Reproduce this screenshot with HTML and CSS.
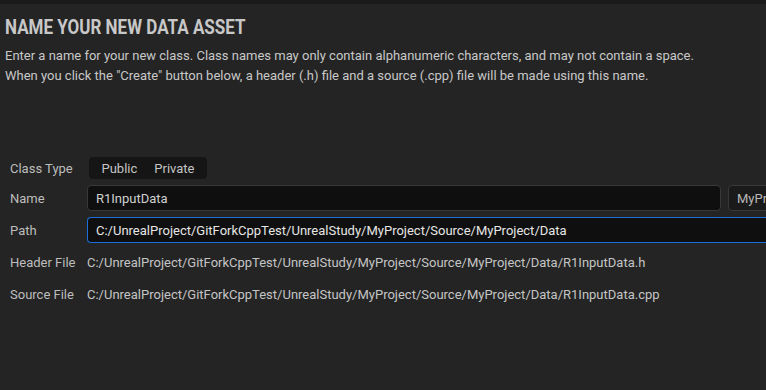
FILE: index.html
```html
<!DOCTYPE html>
<html lang="en">
<head>
  <meta charset="UTF-8">
  <title>Name Your New Data Asset</title>
  <link rel="stylesheet" href="styles.css">
</head>
<body>
  <div class="top-strip"></div>

  <div class="page">
    <h1 class="title"><span>NAME YOUR NEW DATA ASSET</span></h1>
    <p class="desc">Enter a name for your new class. Class names may only contain alphanumeric characters, and may not contain a space.<br>When you click the "Create" button below, a header (.h) file and a source (.cpp) file will be made using this name.</p>

    <div class="form">
      <div class="label">Class Type</div>
      <div class="value">
        <div class="segmented">
          <span class="seg">Public</span>
          <span class="seg">Private</span>
        </div>
      </div>

      <div class="label">Name</div>
      <div class="value name-row">
        <div class="field name">R1InputData</div>
        <div class="field module">MyProject (Runtime)</div>
      </div>

      <div class="label">Path</div>
      <div class="value">
        <div class="field focused">C:/UnrealProject/GitForkCppTest/UnrealStudy/MyProject/Source/MyProject/Data</div>
      </div>

      <div class="label">Header File</div>
      <div class="value text">C:/UnrealProject/GitForkCppTest/UnrealStudy/MyProject/Source/MyProject/Data/R1InputData.h</div>

      <div class="label">Source File</div>
      <div class="value text">C:/UnrealProject/GitForkCppTest/UnrealStudy/MyProject/Source/MyProject/Data/R1InputData.cpp</div>
    </div>
  </div>
</body>
</html>
```

FILE: styles.css
```css
body {
  margin: 0;
  padding: 0;
  background-color: #242424;
  color: #c4c4c4;
  font-family: Roboto, "Noto Sans", Arial, sans-serif;
  font-size: 13px;
  overflow: hidden;
}

.top-strip {
  height: 4px;
  background-color: #1a1a1a;
}

.page {
  padding: 0 0 0 5px;
}

.title {
  margin: 0;
  padding-top: 11px;
  font-size: 21px;
  line-height: 24px;
  font-weight: 700;
  color: #c8c8c8;
  white-space: nowrap;
}

.title span {
  display: inline-block;
  transform: scaleX(0.81);
  transform-origin: left center;
}

.desc {
  margin: 7px 0 0 0;
  line-height: 20px;
  color: #c8c8c8;
  white-space: nowrap;
}

.form {
  display: grid;
  grid-template-columns: 77px 1fr;
  grid-template-rows: 22px 26px 26px 26px 26px;
  row-gap: 6px;
  margin-top: 71px;
  padding-left: 5px;
}

.label {
  display: flex;
  align-items: center;
  color: #bdbdbd;
  white-space: nowrap;
}

.value {
  display: flex;
  align-items: center;
  min-width: 0;
}

.value.text {
  white-space: nowrap;
}

.segmented {
  display: flex;
  align-items: center;
  height: 22px;
  margin-left: 2px;
  padding: 0 4px;
  background-color: #151515;
  border-radius: 4px;
}

.seg {
  padding: 0 8.5px;
  color: #c4c4c4;
}

.name-row {
  gap: 7px;
}

.field {
  box-sizing: border-box;
  height: 26px;
  display: flex;
  align-items: center;
  padding: 0 8px;
  background-color: #0f0f0f;
  border: 1px solid #383838;
  border-radius: 4px;
  color: #cfcfcf;
  white-space: nowrap;
  overflow: hidden;
  flex: 1;
  min-width: 0;
}

.field.name {
  flex: 0 0 634px;
}

.field.module {
  flex: 0 0 200px;
  color: #b8b8b8;
  background-color: #1a1a1a;
}

.field.focused {
  border-color: #1c6fd8;
  color: #e6e6e6;
  border-right: none;
  border-radius: 4px 0 0 4px;
}
```
